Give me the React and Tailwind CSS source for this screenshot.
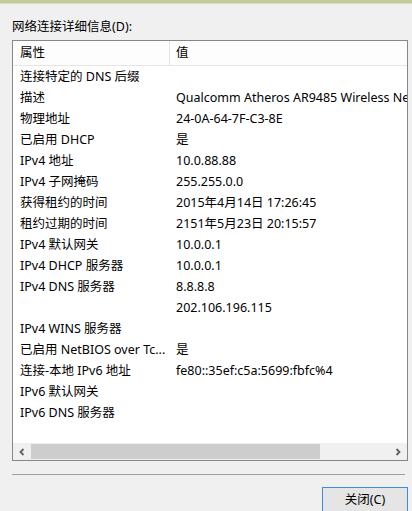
const ROWS = [
  ["连接特定的 DNS 后缀", ""],
  ["描述", "Qualcomm Atheros AR9485 Wireless Network Adapter"],
  ["物理地址", "24-0A-64-7F-C3-8E"],
  ["已启用 DHCP", "是"],
  ["IPv4 地址", "10.0.88.88"],
  ["IPv4 子网掩码", "255.255.0.0"],
  ["获得租约的时间", "2015年4月14日 17:26:45"],
  ["租约过期的时间", "2151年5月23日 20:15:57"],
  ["IPv4 默认网关", "10.0.0.1"],
  ["IPv4 DHCP 服务器", "10.0.0.1"],
  ["IPv4 DNS 服务器", "8.8.8.8"],
  ["", "202.106.196.115"],
  ["IPv4 WINS 服务器", ""],
  ["已启用 NetBIOS over Tc...", "是"],
  ["连接-本地 IPv6 地址", "fe80::35ef:c5a:5699:fbfc%4"],
  ["IPv6 默认网关", ""],
  ["IPv6 DNS 服务器", ""],
];

export default function App() {
  return (
    <div className="w-[412px] h-[511px] overflow-hidden bg-[#f0f0f0] text-[12.5px] text-black font-['Noto_Sans','Noto_Sans_CJK_SC',sans-serif]">
      <div className="h-[3px] bg-[#c4ca9a]" />
      <div className="h-px bg-[#dcdccc]" />

      {/* label */}
      <div className="pl-[12px] pt-[16px] h-[36px] leading-[14px]">
        网络连接详细信息(D):
      </div>

      {/* list box */}
      <div className="ml-[12px] w-[396px] h-[421px] border border-[#828790] bg-white flex flex-col">
        <div className="h-[25px] flex bg-[#fdfdfd] border-b border-[#e5e5e5] leading-[24px]">
          <div className="w-[157px] pl-[7px] border-r border-[#e5e5e5]">属性</div>
          <div className="pl-[6px]">值</div>
        </div>
        <div className="flex-1 overflow-hidden">
          {ROWS.map(([k, v], i) => (
            <div key={i} className="h-[21px] flex leading-[21px] whitespace-nowrap">
              <div className="w-[163px] pl-[7px] shrink-0 overflow-hidden">{k}</div>
              <div className="overflow-hidden">{v}</div>
            </div>
          ))}
        </div>
        {/* horizontal scrollbar */}
        <div className="h-[17px] flex items-stretch bg-[#f0f0f0]">
          <div className="w-[18px] flex items-center justify-center">
            <svg width="8" height="8" viewBox="0 0 8 8">
              <path d="M5.5 1 L2.5 4 L5.5 7" fill="none" stroke="#606060" strokeWidth="1.8" />
            </svg>
          </div>
          <div className="w-[289px] my-px bg-[#cdcdcd]" />
          <div className="flex-1" />
          <div className="w-[18px] flex items-center justify-center">
            <svg width="8" height="8" viewBox="0 0 8 8">
              <path d="M2.5 1 L5.5 4 L2.5 7" fill="none" stroke="#606060" strokeWidth="1.8" />
            </svg>
          </div>
        </div>
      </div>

      {/* separator */}
      <div className="ml-[12px] mt-[13px] w-[393px] h-px bg-[#a0a0a0]" />

      {/* button */}
      <div className="flex justify-end pr-[4px] pt-[12px]">
        <div className="w-[86px] h-[26px] border border-[#3c8ce0] bg-[#e5e5e5] flex items-center justify-center leading-[14px]">
          关闭(C)
        </div>
      </div>
    </div>
  );
}
